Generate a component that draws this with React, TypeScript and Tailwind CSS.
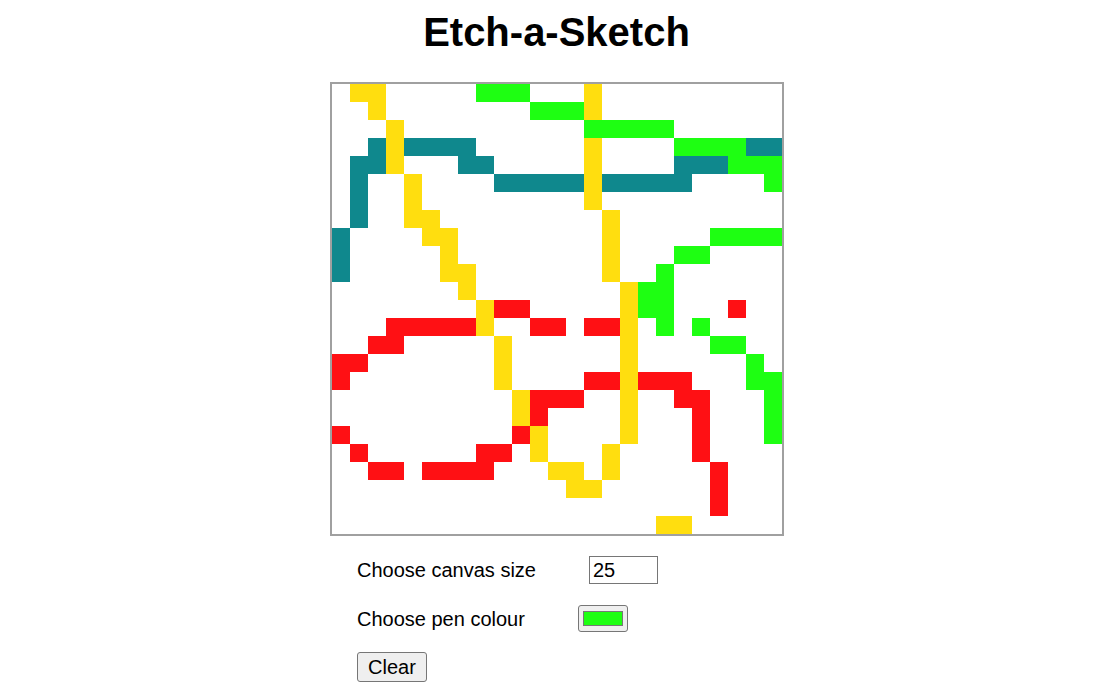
const rows = [
  ".YY.....GGG...Y..........",
  "..Y........GGGY..........",
  "...Y..........GGGGG......",
  "..TYTTTT......Y....GGGGTT",
  ".TTY...TT.....Y....TTTGGG",
  ".T..Y....TTTTTYTTTTT....G",
  ".T..Y.........Y..........",
  ".T..YY.........Y.........",
  "T....YY........Y.....GGGG",
  "T.....Y........Y...GG....",
  "T.....YY.......Y..G......",
  ".......Y........YGG......",
  "........YRR.....YGG...R..",
  "...RRRRRY..RR.RRY.G.G....",
  "..RR.....Y......Y....GG..",
  "RR.......Y......Y......G.",
  "R........Y....RRYRRR...GG",
  "..........YRRR..Y..RR...G",
  "..........YR....Y...R...G",
  "R.........RY....Y...R...G",
  ".R......RR.Y...Y....R....",
  "..RR.RRRR...YY.Y.....R...",
  ".............YY......R...",
  ".....................R...",
  "..................YY.....",
]

const cellColour: Record<string, string> = {
  ".": "bg-white",
  Y: "bg-[#ffde0f]",
  T: "bg-[#0f888d]",
  G: "bg-[#1eff12]",
  R: "bg-[#ff1014]",
}

function Canvas() {
  return (
    <div className="grid grid-cols-[repeat(25,18px)] border-2 border-[#a0a0a0] bg-white">
      {rows.map((row, r) =>
        row.split("").map((c, i) => <div key={`${r}-${i}`} className={`h-[18px] w-[18px] ${cellColour[c]}`} />)
      )}
    </div>
  )
}

export default function App() {
  return (
    <div className="min-h-screen bg-white font-['Liberation_Sans',Arial,sans-serif] text-black">
      <h1 className="mt-[9px] pr-[3px] text-center text-[40px] leading-[46px] font-bold">Etch-a-Sketch</h1>
      <div className="mt-[27px] flex justify-center pr-[2px]">
        <div className="flex flex-col">
          <Canvas />
          <div className="flex flex-col items-start pl-[27px] text-[20px]">
            <div className="mt-[20px] flex h-[28px] items-center gap-[53px]">
              <label htmlFor="size">Choose canvas size</label>
              <input
                id="size"
                type="text"
                defaultValue="25"
                className="h-[28px] w-[69px] border border-[#767676] bg-white px-[3px] text-[20px] leading-[24px]"
              />
            </div>
            <div className="mt-[21px] flex h-[27px] items-center gap-[53px]">
              <span>Choose pen colour</span>
              <div className="flex h-[27px] w-[50px] items-start rounded-[3px] border border-[#767676] bg-[#efefef] pt-[5px] pl-[4px]">
                <div className="h-[15px] w-[40px] border border-[#777777] bg-[#1eff12]" />
              </div>
            </div>
            <button className="mt-[20px] h-[30px] w-[70px] rounded-[3px] border border-[#767676] bg-[#efefef] text-[20px] leading-[24px]">
              Clear
            </button>
          </div>
        </div>
      </div>
    </div>
  )
}
